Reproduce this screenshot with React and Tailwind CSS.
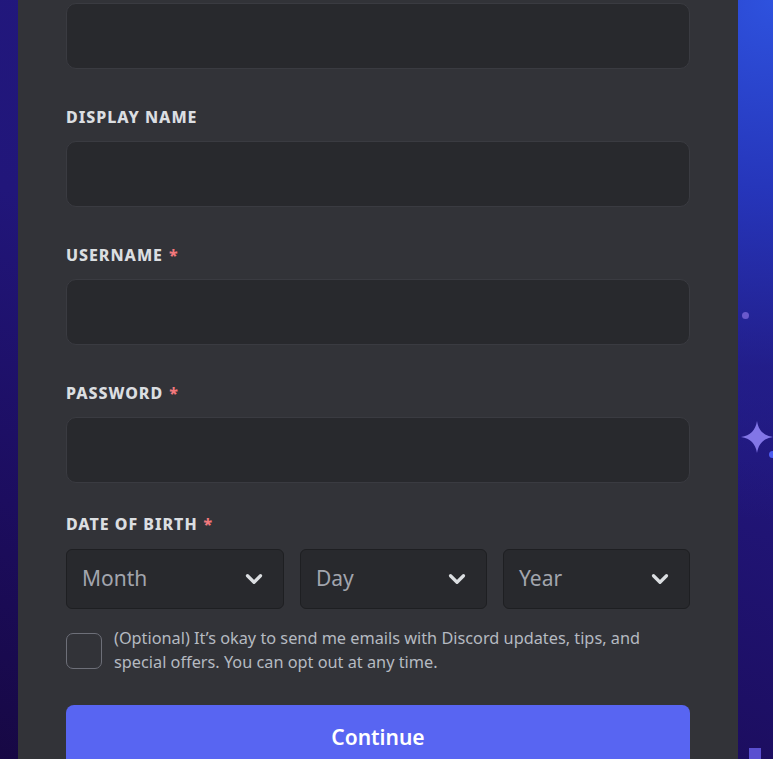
import { ChevronDown } from "lucide-react";

const font = { fontFamily: '"Noto Sans", "Open Sans", Arial, sans-serif' };

function Label({ text, required }) {
  return (
    <div className="h-5 flex items-center text-[16px] font-extrabold uppercase leading-5 tracking-[0.06em] text-[#dbdee1]">
      {text}
      {required && <span className="ml-[6px] text-[#f2787c]">*</span>}
    </div>
  );
}

function Field({ label, required }) {
  return (
    <div className="mt-[38px] first:mt-0">
      <Label text={label} required={required} />
      <div className="mt-[14px] h-[66px] w-full rounded-[10px] border border-[#3a3b41] bg-[#28292d]" />
    </div>
  );
}

function Select({ text, width }) {
  return (
    <div
      className={`flex h-[60px] items-center justify-between rounded-[6px] border border-[#1e1f22] bg-[#28292d] pl-[15px] pr-[16px] ${width}`}
    >
      <span className="text-[21px] text-[#a2a5ad]">{text}</span>
      <ChevronDown size={26} strokeWidth={3} className="text-[#dbdee1]" />
    </div>
  );
}

function Sparkle({ className }) {
  return (
    <svg viewBox="0 0 20 20" className={className}>
      <path d="M10 0 C11 6 14 9 20 10 C14 11 11 14 10 20 C9 14 6 11 0 10 C6 9 9 6 10 0Z" fill="#8d80f2" />
    </svg>
  );
}

export default function App() {
  return (
    <div
      className="relative flex h-[759px] w-[773px] overflow-hidden bg-[radial-gradient(circle_at_100%_0%,rgba(46,82,222,1)_0%,rgba(38,56,192,0.9)_18%,rgba(36,40,160,0.4)_34%,rgba(34,26,128,0)_48%),linear-gradient(200deg,#22197f_0%,#21167a_45%,#1c0d5f_75%,#170844_100%)]"
      style={font}
    >
      {/* estrellas del fondo */}
      <div className="absolute left-[742px] top-[312px] h-[7px] w-[7px] rounded-full bg-[#7b66d9] opacity-80 blur-[0.5px]" />
      <Sparkle className="absolute left-[741px] top-[421px] h-[32px] w-[32px] opacity-90 blur-[0.6px]" />
      <div className="absolute left-[769px] top-[451px] h-[7px] w-[7px] rounded-full bg-[#4c5bf0]" />
      <div className="absolute left-[749px] top-[748px] h-[12px] w-[12px] bg-[#5a4fd0]" />

      <div className="ml-[18px] w-[720px] bg-[#323338] pl-[48px] pr-[48px] pt-[3px]">
        <div className="h-[66px] w-full rounded-[10px] border border-[#3a3b41] bg-[#28292d]" />

        <div className="mt-[38px]">
          <Field label="Display Name" />
          <Field label="Username" required />
          <Field label="Password" required />
        </div>

        <div className="mt-[31px]">
          <Label text="Date of Birth" required />
          <div className="mt-[15px] flex gap-4">
            <Select text="Month" width="w-[218px]" />
            <Select text="Day" width="w-[187px]" />
            <Select text="Year" width="w-[187px]" />
          </div>
        </div>

        <div className="mt-[17px] flex items-start gap-3">
          <div className="mt-[7px] h-[36px] w-[36px] shrink-0 rounded-[7px] border border-[#6d6f78]" />
          <p className="max-w-[535px] text-[16.3px] leading-6 text-[#b5bac1]">
            (Optional) It’s okay to send me emails with Discord updates, tips, and special offers. You can opt out at any time.
          </p>
        </div>

        <button className="mt-[31px] flex h-[66px] w-full items-center justify-center rounded-[8px] bg-[#5865f2] text-[21px] font-semibold text-white">
          Continue
        </button>
      </div>
    </div>
  );
}
